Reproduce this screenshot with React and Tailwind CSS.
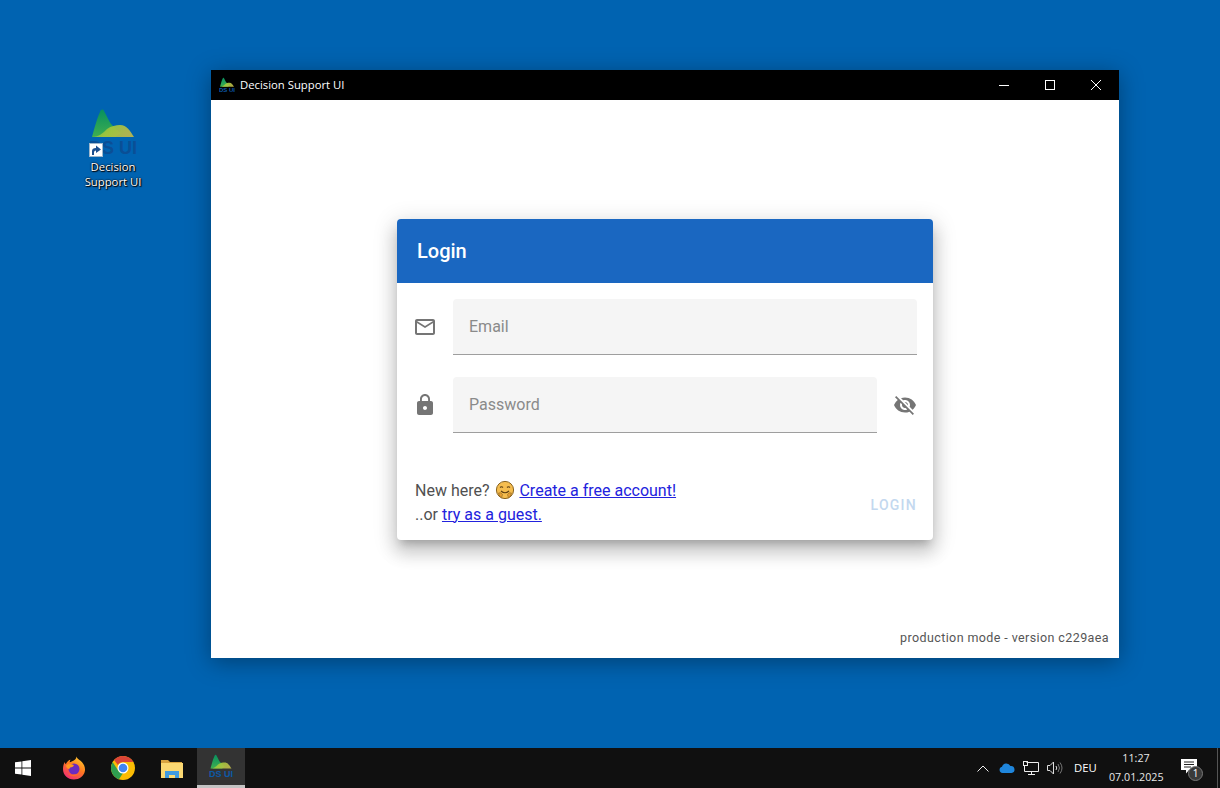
import React from "react";
import { MdMailOutline, MdLock, MdVisibilityOff } from "react-icons/md";

function Logo({ className, idp, textFill = "#0d5aa8" }) {
  return (
    <svg viewBox="0 0 48 50" className={className}>
      <defs>
        <linearGradient id={idp + "a"} x1="0" y1="0" x2="0" y2="1">
          <stop offset="0" stopColor="#07905f" />
          <stop offset="1" stopColor="#3fae50" />
        </linearGradient>
        <linearGradient id={idp + "b"} x1="0" y1="0" x2="1" y2="0.3">
          <stop offset="0" stopColor="#5cb848" />
          <stop offset=".5" stopColor="#a4c73c" />
          <stop offset="1" stopColor="#bdb94a" />
        </linearGradient>
      </defs>
      <path d="M3 29 C5 22 8 10 11 4 C12 1 14 1 15 3 C18 8 20 14 23 17 C26 20 29 23 32 25 L26 29 Z" fill={`url(#${idp}a)`} />
      <path d="M3 29 C10 29 14 25 18 21 C22 18 27 17 31 17 C38 17 41 23 45 29 Z" fill={`url(#${idp}b)`} fillOpacity=".92" />
      <text x="24" y="46" textAnchor="middle" fontFamily="Liberation Sans, sans-serif" fontWeight="700" fontSize="18" fill={textFill}>DS UI</text>
    </svg>
  );
}

function Hug() {
  return (
    <svg viewBox="0 0 20 20" className="w-[20px] h-[20px] inline-block align-[-4px] ml-[2px]">
      <circle cx="10" cy="10" r="8.600" fill="#f5bd4f" stroke="#8a6420" strokeWidth="1" />
      <path d="M5 7.500q1.500-1.600 3 0M12 7.500q1.500-1.600 3 0" stroke="#5b3d12" strokeWidth="1.100" fill="none" />
      <path d="M6 11q4 3.400 8 0" stroke="#5b3d12" strokeWidth="1.100" fill="none" />
      <path d="M3.500 13q2.500-1 4 1.500l-1 3.300q-2.300-1.300-3-4.800zM16.500 13q-2.500-1-4 1.500l1 3.300q2.300-1.300 3-4.800z" fill="#e89f33" stroke="#8a6420" strokeWidth=".6" />
    </svg>
  );
}

function Firefox() {
  return (
    <svg viewBox="0 0 24 24" className="w-[24px] h-[24px]">
      <defs>
        <linearGradient id="ff" x1="0.8" y1="0" x2="0.2" y2="1">
          <stop offset="0" stopColor="#ffcf2e" />
          <stop offset=".45" stopColor="#ff7a1f" />
          <stop offset="1" stopColor="#f0287a" />
        </linearGradient>
      </defs>
      <path d="M14.500 0.500c.4 2.200 2 2.600 4 4.300 3.400 2.800 5 6.700 4.400 10.200-1 5.400-5.700 8.500-11 8.500C5.600 23.500 1 18.900 1 13c0-2.500.6-5 1.800-7 0 1 .4 1.800 1 2.300C5 5.500 7 4 8.500 3.800c-.6 1-.9 1.700-.8 2.400 2.300-.8 6.500-1.700 6.800-5.700z" fill="url(#ff)" />
      <circle cx="12" cy="13" r="5.500" fill="#6c2bc0" />
      <path d="M4 9.500c2.500-1.800 5-1.800 7.500-.6 1.200.6-1 2.200-2.500 2.400-1 .2-1.700 1-1.600 2-2-.3-3.300-1.900-3.400-3.800z" fill="#ff9a1f" />
      <path d="M6 18c3 3 9 3 12-1-3 1.500-8 2.500-12 1z" fill="#ff6a2a" />
    </svg>
  );
}

function Chrome() {
  return (
    <svg viewBox="0 0 24 24" className="w-[24px] h-[24px]">
      <circle cx="12" cy="12" r="12" fill="#fbbc04" />
      <path d="M12 0a12 12 0 0 1 10.400 6H12a6 6 0 0 0-5.200 3L3.100 3.900A12 12 0 0 1 12 0z" fill="#db4437" />
      <path d="M1.600 6a12 12 0 0 0 6.400 17.300l4-6.300a6 6 0 0 1-5.200-3L1.600 6z" fill="#2f9e4f" />
      <circle cx="12" cy="12" r="5.500" fill="#fff" />
      <circle cx="12" cy="12" r="4.300" fill="#4285f4" />
    </svg>
  );
}

function Folder() {
  return (
    <svg viewBox="0 0 22 20" className="w-[22px] h-[20px]">
      <path d="M0 2h7l2 2h12v3H0z" fill="#d9a441" />
      <path d="M0 5h22v15H0z" fill="#fbd872" />
      <path d="M4 13h14v7h-4v-3h-6v3H4z" fill="#3f9ae0" />
    </svg>
  );
}

const seg = { fontFamily: '"Open Sans", sans-serif' };

export default function App() {
  return (
    <div className="h-[788px] w-[1220px] flex flex-col overflow-hidden" style={{ fontFamily: "Roboto, sans-serif" }}>
      <div className="relative flex-1 bg-[#0063b1]">
        <div className="absolute left-[73px] top-[108px] w-[80px] flex flex-col items-center">
          <div className="relative w-[48px] h-[50px]">
            <Logo className="w-[48px] h-[50px]" idp="d" textFill="#0a4f96" />
            <div className="absolute left-0 top-[35px] w-[14px] h-[14px] bg-white border border-[#9fb7cc] flex items-center justify-center">
              <svg viewBox="0 0 12 12" className="w-[12px] h-[12px]">
                <path d="M2 11V7q0-3 4-3V1.500L11 5.500 6 9V6.500q-2 0-2 2V11z" fill="#1c4f8f" />
              </svg>
            </div>
          </div>
          <div className="text-white text-[11.3px] leading-[15px] text-center mt-[1px] [text-shadow:1px_1px_1px_#000,0_0_2px_#000,0_0_1px_#000]" style={seg}>
            Decision<br />Support UI
          </div>
        </div>

        <div className="absolute left-[211px] top-[70px] w-[908px] h-[588px] flex flex-col bg-white shadow-[0_4px_22px_rgba(0,0,0,0.35)]">
          <div className="h-[30px] bg-black flex items-center text-white">
            <Logo className="w-[16px] h-[17px] ml-[8px] mr-[5px]" idp="t" />
            <span className="text-[11.3px]" style={seg}>Decision Support UI</span>
            <div className="ml-auto flex h-full">
              <div className="w-[46px] flex items-center justify-center">
                <div className="w-[10px] h-[1px] bg-white" />
              </div>
              <div className="w-[46px] flex items-center justify-center">
                <div className="w-[10px] h-[10px] border border-white" />
              </div>
              <div className="w-[46px] flex items-center justify-center">
                <svg viewBox="0 0 10 10" className="w-[10px] h-[10px]">
                  <path d="M0 0l10 10M10 0L0 10" stroke="#fff" strokeWidth="1" />
                </svg>
              </div>
            </div>
          </div>
          <div className="relative flex-1 flex items-center justify-center">
            <div className="w-[536px] h-[321px] bg-white rounded-[4px] overflow-hidden flex flex-col shadow-[0_7px_8px_-4px_rgba(0,0,0,0.2),0_12px_17px_2px_rgba(0,0,0,0.14),0_5px_22px_4px_rgba(0,0,0,0.12)]">
              <div className="h-[64px] bg-[#1a67c1] flex items-center pl-[20px] text-white text-[20px] font-medium">
                Login
              </div>
              <div className="flex-1 flex flex-col px-[16px] pt-[16px]">
                <div className="flex items-center gap-[16px] mb-[22px]">
                  <MdMailOutline className="w-[24px] h-[24px] text-[#757575]" />
                  <div className="flex-1 h-[56px] bg-[#f5f5f5] rounded-t-[4px] border-b border-[#9e9e9e] flex items-center pl-[16px] pt-[2px] text-[16px] text-[#8a8a8a]">
                    Email
                  </div>
                </div>
                <div className="flex items-center gap-[16px]">
                  <MdLock className="w-[24px] h-[24px] text-[#757575]" />
                  <div className="flex-1 h-[56px] bg-[#f5f5f5] rounded-t-[4px] border-b border-[#9e9e9e] flex items-center pl-[16px] pt-[2px] text-[16px] text-[#8a8a8a]">
                    Password
                  </div>
                  <MdVisibilityOff className="w-[24px] h-[24px] text-[#757575]" />
                </div>
                <div className="flex items-center justify-between mt-[46px] pl-[2px]">
                  <div className="text-[16px] leading-[24px] text-[#505050]">
                    <div>
                      New here? <Hug /> <span className="text-[#2222dd] underline">Create a free account!</span>
                    </div>
                    <div>
                      ..or <span className="text-[#2222dd] underline">try as a guest.</span>
                    </div>
                  </div>
                  <div className="text-[14px] font-medium tracking-[1.25px] text-[#c3d8ef] mt-[6px]">LOGIN</div>
                </div>
              </div>
            </div>
            <div className="absolute right-[10px] bottom-[12px] text-[12.5px] leading-[16px] tracking-[0.4px] text-[#555555]">
              production mode - version c229aea
            </div>
          </div>
        </div>
      </div>

      <div className="h-[40px] bg-[#101010] flex items-center text-white">
        <div className="w-[48px] flex justify-center">
          <svg viewBox="0 0 16 16" className="w-[16px] h-[16px] -ml-[2px]">
            <path d="M0 2.300l6.500-.9v6.200H0zM7.300 1.300L16 0v7.600H7.300zM0 8.400h6.500v6.200L0 13.700zM7.300 8.400H16V16l-8.700-1.200z" fill="#fff" />
          </svg>
        </div>
        <div className="w-[51px] flex justify-center"><Firefox /></div>
        <div className="w-[48px] flex justify-center"><Chrome /></div>
        <div className="w-[50px] flex justify-center"><Folder /></div>
        <div className="w-[48px] h-full bg-[#333333] border-b-[3px] border-[#c4c4c4] flex items-center justify-center">
          <Logo className="w-[24px] h-[25px]" idp="b" />
        </div>
        <div className="ml-auto flex items-center h-full">
          <svg viewBox="0 0 12 7" className="w-[12px] h-[7px] mr-[10px]">
            <path d="M.5 6.500L6 1l5.500 5.500" stroke="#eee" strokeWidth="1" fill="none" />
          </svg>
          <svg viewBox="0 0 16 10" className="w-[16px] h-[10px] mr-[8px]">
            <path d="M3.500 10a3.200 3.200 0 0 1-.5-6.300A4.500 4.500 0 0 1 11.400 3 3.500 3.500 0 0 1 12.500 10z" fill="#1f86dc" />
          </svg>
          <svg viewBox="0 0 16 14" className="w-[16px] h-[14px] mr-[8px]" fill="none" stroke="#eee" strokeWidth="1">
            <path d="M3.500 1.500H15.500V10.500H1.500V5M8.500 10.500V13M5 13.500H12" />
            <rect x=".5" y=".5" width="4" height="4" />
          </svg>
          <svg viewBox="0 0 16 14" className="w-[16px] h-[14px] mr-[11px]" fill="none" stroke="#ddd" strokeWidth="1">
            <path d="M.5 4.500H3L6.500 1v12L3 9.500H.5zM9 5q1.500 2 0 4" />
            <path d="M11 3q3 4 0 8M13 1.500q4 5.500 0 11" stroke="#777" />
          </svg>
          <span className="text-[11.3px] w-[22px] mr-[13px] whitespace-nowrap" style={seg}>DEU</span>
          <div className="w-[54px] text-center text-[10.7px] leading-[19px] text-[#e8e8e8] mr-[18px] whitespace-nowrap" style={seg}>
            <div>11:27</div>
            <div>07.01.2025</div>
          </div>
          <div className="relative w-[18px] h-[16px] mr-[18px] mb-[2px]">
            <svg viewBox="0 0 16 15" className="w-[16px] h-[15px]">
              <path d="M0 0h16v11H8l-3 3.500V11H0z" fill="#fff" />
              <path d="M3 3h10M3 5.500h10M3 8h7" stroke="#222" strokeWidth="1" />
            </svg>
            <div className="absolute left-[7px] top-[7px] w-[15px] h-[15px] rounded-full bg-[#3a3a3a] border border-[#777] text-[10px] leading-[13px] text-center text-white" style={seg}>1</div>
          </div>
          <div className="w-[1px] h-full bg-[#555555] mr-[2px]" />
        </div>
      </div>
    </div>
  );
}
